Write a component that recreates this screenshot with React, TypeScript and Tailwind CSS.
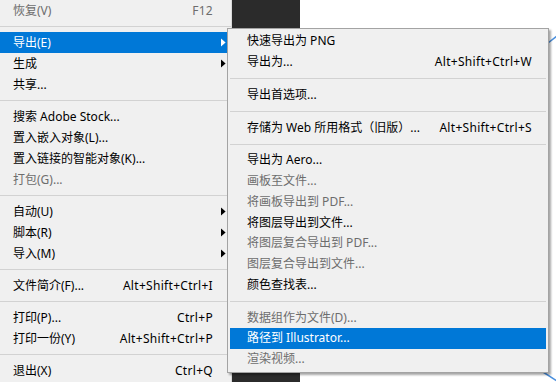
import React from "react";

type Item =
  | { sep: true }
  | { label: string; shortcut?: string; disabled?: boolean; active?: boolean; sub?: boolean };

const leftItems: Item[] = [
  { label: "恢复(V)", shortcut: "F12", disabled: true },
  { sep: true },
  { label: "导出(E)", active: true, sub: true },
  { label: "生成", sub: true },
  { label: "共享..." },
  { sep: true },
  { label: "搜索 Adobe Stock..." },
  { label: "置入嵌入对象(L)..." },
  { label: "置入链接的智能对象(K)..." },
  { label: "打包(G)...", disabled: true },
  { sep: true },
  { label: "自动(U)", sub: true },
  { label: "脚本(R)", sub: true },
  { label: "导入(M)", sub: true },
  { sep: true },
  { label: "文件简介(F)...", shortcut: "Alt+Shift+Ctrl+I" },
  { sep: true },
  { label: "打印(P)...", shortcut: "Ctrl+P" },
  { label: "打印一份(Y)", shortcut: "Alt+Shift+Ctrl+P" },
  { sep: true },
  { label: "退出(X)", shortcut: "Ctrl+Q" },
];

const subItems: Item[] = [
  { label: "快速导出为 PNG" },
  { label: "导出为...", shortcut: "Alt+Shift+Ctrl+W" },
  { sep: true },
  { label: "导出首选项..." },
  { sep: true },
  { label: "存储为 Web 所用格式（旧版）...", shortcut: "Alt+Shift+Ctrl+S" },
  { sep: true },
  { label: "导出为 Aero..." },
  { label: "画板至文件...", disabled: true },
  { label: "将画板导出到 PDF...", disabled: true },
  { label: "将图层导出到文件..." },
  { label: "将图层复合导出到 PDF...", disabled: true },
  { label: "图层复合导出到文件...", disabled: true },
  { label: "颜色查找表..." },
  { sep: true },
  { label: "数据组作为文件(D)...", disabled: true },
  { label: "路径到 Illustrator...", active: true },
  { label: "渲染视频...", disabled: true },
];

const Arrow = ({ white }: { white?: boolean }) => (
  <svg width="5" height="9" viewBox="0 0 5 9">
    <path d="M0 0.5L4.6 4.5L0 8.5Z" fill={white ? "#ffffff" : "#000000"} />
  </svg>
);

const itemColor = (it: { disabled?: boolean; active?: boolean }) =>
  it.active ? "bg-[#0078d7] text-white" : it.disabled ? "text-[#6d6d6d]" : "text-black";

const LeftMenu = () => (
  <div className="w-[232px] h-full bg-[#f0f0f0] border-r border-[#d9d9d9] flex flex-col">
    {leftItems.map((it, idx) =>
      "sep" in it ? (
        <div key={idx} className="h-[11px] flex items-center">
          <div className="h-px w-full bg-[#d2d2d2]" />
        </div>
      ) : (
        <div key={idx} className={`h-[21px] flex items-center pl-[13px] ${itemColor(it)}`}>
          <span className="flex-1 whitespace-nowrap">{it.label}</span>
          {it.shortcut && <span className="whitespace-nowrap tracking-[0.3px]">{it.shortcut}</span>}
          <span className="w-[18px] pl-[8px] flex items-center">{it.sub && <Arrow white={it.active} />}</span>
        </div>
      )
    )}
  </div>
);

const SubMenu = () => (
  <div className="absolute left-[227px] top-[28px] w-[322px] h-[345px] bg-[#f0f0f0] border border-[#a3a3a3] shadow-[2px_2px_2px_rgba(0,0,0,0.35)] px-[2px] pt-[2px] flex flex-col">
    {subItems.map((it, idx) =>
      "sep" in it ? (
        <div key={idx} className="h-[12px] flex items-center">
          <div className="h-px w-full bg-[#d2d2d2]" />
        </div>
      ) : (
        <div key={idx} className={`h-[20.75px] flex items-center justify-between pl-[17px] pr-[14px] ${itemColor(it)}`}>
          <span className="whitespace-nowrap">{it.label}</span>
          {it.shortcut && <span className="whitespace-nowrap tracking-[0.3px]">{it.shortcut}</span>}
        </div>
      )
    )}
  </div>
);

export default function App() {
  return (
    <div className="relative w-[556px] h-[382px] overflow-hidden bg-white flex text-[12px] font-['Noto_Sans','Noto_Sans_CJK_SC',sans-serif]">
      <LeftMenu />
      <div className="w-[68px] h-full bg-[#2b2b2b]" />
      <div className="flex-1 h-full bg-white" />
      {/* canvas strokes peeking out behind the submenu */}
      <svg className="absolute left-[540px] top-0" width="16" height="382" viewBox="0 0 16 382">
        <path d="M8 43L17 36" stroke="#4a8fdd" strokeWidth="1.5" fill="none" />
        <path d="M3 372L17 381" stroke="#4a8fdd" strokeWidth="1.5" fill="none" />
      </svg>
      <SubMenu />
    </div>
  );
}
